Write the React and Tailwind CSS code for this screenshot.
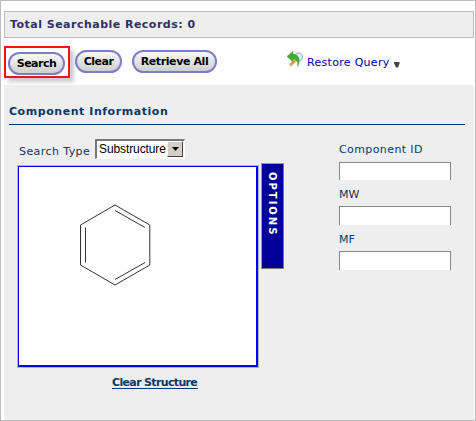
const verdana = "font-['DejaVu_Sans',Verdana,sans-serif] whitespace-nowrap";

function PillButton({ children, className }) {
  return (
    <button
      className={`h-[23px] shrink-0 rounded-full border-2 border-[#7c7cc8] bg-linear-to-b from-[#f8f8f8] to-[#cfcfcf] text-center text-[11px] leading-[19px] font-bold text-black ${className}`}
    >
      {children}
    </button>
  );
}

function Field({ label, className, labelClass, inputClass }) {
  return (
    <label className={`block ${className}`}>
      <span className={`block h-[14px] text-[11px] leading-[14px] ${labelClass}`}>{label}</span>
      <input className={`block w-28 border border-b-0 border-[#868686] bg-white outline-none ${inputClass}`} />
    </label>
  );
}

function RestoreIcon() {
  return (
    <svg width="17" height="17" viewBox="0 0 17 17">
      <circle cx="11.5" cy="6" r="4" fill="#dceefb" stroke="#9fc2e8" strokeWidth="1.3" />
      <path d="M3 14.5 L8 10" stroke="#b9b1a5" strokeWidth="3" />
      <path d="M3.5 13.5 L8 9.5" stroke="#f59a21" strokeWidth="2" />
      <path d="M0 5.5 L6 0.3 V3 C10 3 14.5 6.5 11 15.5 C10.8 10.5 9.5 8.5 6 8.5 V11 Z" fill="#3fae2a" stroke="#6f9d60" strokeWidth=".5" />
    </svg>
  );
}

function Benzene() {
  return (
    <svg className="block" width="238" height="198" viewBox="19 167 238 198" fill="none" stroke="#333" strokeWidth="1">
      <path d="M115 205 L149.8 225 V265 L115 285 L80.5 265 V225 Z" />
      <path d="M115 210.5 L145 227.5 M85.5 227.5 V262.5 M115 279.5 L145 262.5" />
    </svg>
  );
}

export default function App() {
  return (
    <div className={`h-[421px] w-[476px] overflow-hidden border border-[#bcbcbc] bg-white pt-[10px] pl-[3px] ${verdana}`}>
      <header className="h-[27px] w-[470px] border border-[#bdbdbd] bg-[#eee] pl-[5px] text-[11px] leading-[25px] font-bold tracking-[0.48px] text-[#303066]">
        Total Searchable Records: 0
      </header>
      <div className="flex h-[47px] w-[470px] items-start pt-2">
        <div className="h-[32px] w-[66px] shrink-0 border-2 border-[#f11] bg-white pt-[2px] pl-[2px] shadow-[4px_4px_4px_#0003]">
          <PillButton className="w-[57px] tracking-[-0.5px]">Search</PillButton>
        </div>
        <PillButton className="mt-1 ml-[5px] w-[47px] tracking-[-0.5px]">Clear</PillButton>
        <PillButton className="mt-1 ml-[10px] w-[85px] tracking-[-0.4px]">Retrieve All</PillButton>
        <div className="mt-[5px] ml-[70px] flex">
          <RestoreIcon />
          <span className="mt-[5px] ml-[3px] text-[11px] leading-[14px] tracking-[0.3px] text-[#000099]">Restore Query</span>
          <svg className="mt-[11px] ml-[4px]" width="6" height="6" viewBox="0 0 6 6"><path d="M0 0H5.5V1.5L4 5.5H2L.2 1.5Z" fill="#444" /></svg>
        </div>
      </div>
      <main className="h-[335px] w-[470px] bg-[#eee] pl-[5px] text-[#0c3667]">
        <h1 className="h-[40px] w-[456px] border-b border-[#0c3667] pt-[20px] text-[11px] leading-[14px] font-bold tracking-[0.55px]">
          Component Information
        </h1>
        <div className="flex">
          <section className="w-[252px] shrink-0 pt-[14px] pl-2">
            <div className="flex h-[26px] pl-[2px]">
              <span className="mt-[6px] w-[76px] text-[11px] leading-[14px] tracking-[0.42px]">Search Type</span>
              <div className="flex h-[20px] w-[90px] border-t-2 border-r border-b border-l-2 border-t-[#777] border-r-white border-b-white border-l-[#777] bg-white font-['Liberation_Sans',Arial,sans-serif] text-[12px] leading-[17px] text-black">
                <span className="w-[70px] shrink-0 pl-[2px] tracking-[-0.1px]">Substructure</span>
                <span className="flex h-[16px] w-[16px] items-center justify-center border border-t-white border-r-[#444] border-b-[#444] border-l-white bg-[#d4d0c8]">
                  <svg width="7" height="4" viewBox="0 0 7 4"><path d="M0 0H7L3.5 4Z" fill="#000" /></svg>
                </span>
              </div>
            </div>
            <div className="flex">
              <div className="h-[203px] w-[242px] shrink-0 border border-[#b3b3c0]">
                <div className="h-[201px] w-[240px] border-t border-r-2 border-b-2 border-l border-[#0000f4] bg-white">
                  <Benzene />
                </div>
              </div>
              <button className="-mt-[2px] ml-[2px] h-[106px] w-[23px] shrink-0 border border-t-[#999] border-r-[#777] border-b-[#777] border-l-[#999] bg-[#000099] pt-[8px] text-left text-[10px] leading-[21px] font-bold tracking-[2px] text-white [writing-mode:vertical-rl]">
                OPTIONS
              </button>
            </div>
            <a className="mt-[8px] ml-[95px] block h-[13px] w-[86px] border-b border-[#0c3667] text-[11px] leading-[14px] font-bold tracking-[-0.65px]">
              Clear Structure
            </a>
          </section>
          <section className="pt-[18px] pl-[78px]">
            <Field label="Component ID" labelClass="mb-[5px] tracking-[0.4px]" inputClass="h-[18px]" />
            <Field label="MW" className="mt-[8px]" labelClass="mb-[4px]" inputClass="h-[19px]" />
            <Field label="MF" className="mt-[8px]" labelClass="mb-[4px]" inputClass="h-[19px]" />
          </section>
        </div>
      </main>
    </div>
  );
}
